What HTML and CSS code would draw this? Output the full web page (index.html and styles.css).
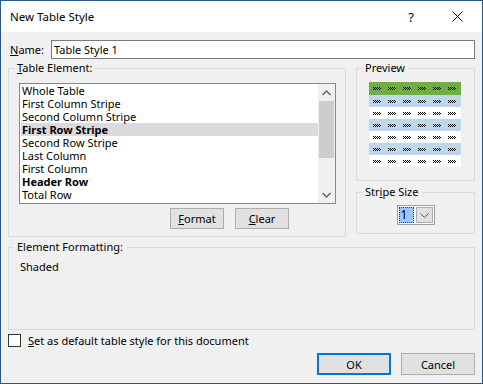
FILE: index.html
```html
<!DOCTYPE html>
<html lang="en">
<head>
  <meta charset="UTF-8" />
  <title>New Table Style</title>
  <link rel="stylesheet" href="styles.css">
</head>
<body>
  <div class="dialog">
    <div class="titlebar">
      <span class="title">New Table Style</span>
      <span class="help">?</span>
      <svg class="close" width="11" height="11" viewBox="0 0 11 11">
        <path d="M0.5 0.5 L10.5 10.5 M10.5 0.5 L0.5 10.5" stroke="#000" stroke-width="1" fill="none"/>
      </svg>
    </div>

    <div class="content">
      <div class="name-row">
        <label class="name-label" for="styleName"><u>N</u>ame:</label>
        <input type="text" id="styleName" class="name-input" value="Table Style 1" />
      </div>

      <div class="main">
        <!-- Table Element -->
        <fieldset class="group elements">
          <legend><u>T</u>able Element:</legend>
          <div class="group-body">
            <div class="listbox">
              <ul class="items">
                <li>Whole Table</li>
                <li>First Column Stripe</li>
                <li>Second Column Stripe</li>
                <li class="bold selected">First Row Stripe</li>
                <li>Second Row Stripe</li>
                <li>Last Column</li>
                <li>First Column</li>
                <li class="bold">Header Row</li>
                <li>Total Row</li>
              </ul>
              <div class="scrollbar">
                <div class="arrow">
                  <svg width="9" height="6" viewBox="0 0 9 6"><path d="M0.5 5 L4.5 1 L8.5 5" stroke="#606060" stroke-width="1.3" fill="none"/></svg>
                </div>
                <div class="thumb"></div>
                <div class="track"></div>
                <div class="arrow">
                  <svg width="9" height="6" viewBox="0 0 9 6"><path d="M0.5 1 L4.5 5 L8.5 1" stroke="#606060" stroke-width="1.3" fill="none"/></svg>
                </div>
              </div>
            </div>
            <div class="list-buttons">
              <button class="btn small"><u>F</u>ormat</button>
              <button class="btn small"><u>C</u>lear</button>
            </div>
          </div>
        </fieldset>

        <div class="side">
          <!-- Preview -->
          <fieldset class="group preview">
            <legend>Preview</legend>
            <div class="group-body">
              <div class="preview-table">
                <div class="prow header"><i></i><i></i><i></i><i></i><i></i><i></i></div>
                <div class="prow band"><i></i><i></i><i></i><i></i><i></i><i></i></div>
                <div class="prow"><i></i><i></i><i></i><i></i><i></i><i></i></div>
                <div class="prow band"><i></i><i></i><i></i><i></i><i></i><i></i></div>
                <div class="prow"><i></i><i></i><i></i><i></i><i></i><i></i></div>
                <div class="prow band"><i></i><i></i><i></i><i></i><i></i><i></i></div>
                <div class="prow"><i></i><i></i><i></i><i></i><i></i><i></i></div>
              </div>
            </div>
          </fieldset>

          <!-- Stripe Size -->
          <fieldset class="group stripe">
            <legend>Str<u>i</u>pe Size</legend>
            <div class="group-body">
              <div class="combo">
                <span class="combo-value">1</span>
                <span class="combo-drop">
                  <svg width="9" height="5" viewBox="0 0 9 5"><path d="M0.5 0.5 L4.5 4.5 L8.5 0.5" stroke="#555" stroke-width="1" fill="none"/></svg>
                </span>
              </div>
            </div>
          </fieldset>
        </div>
      </div>

      <fieldset class="group formatting">
        <legend>Element Formatting:</legend>
        <div class="group-body">Shaded</div>
      </fieldset>

      <div class="check-row">
        <span class="checkbox"></span>
        <span><u>S</u>et as default table style for this document</span>
      </div>

      <div class="dialog-buttons">
        <button class="btn wide default">OK</button>
        <button class="btn wide">Cancel</button>
      </div>
    </div>
  </div>
</body>
</html>
```

FILE: styles.css
```css
body {
  margin: 0;
  font-family: 'Noto Sans', 'Open Sans', sans-serif;
  font-size: 11px;
  color: #000;
  background: #fff;
}

.dialog {
  width: 483px;
  height: 384px;
  box-sizing: border-box;
  border: 1px solid #2b5583;
  background: #f0f0f0;
  display: flex;
  flex-direction: column;
}

/* title bar */
.titlebar {
  height: 31px;
  background: #fff;
  display: flex;
  align-items: center;
  padding-left: 9px;
}

.title {
  font-size: 11.5px;
  flex: 1;
}

.help {
  font-size: 13px;
  margin-right: 38px;
}

.close {
  margin-right: 19px;
}

.content {
  padding: 0 7px;
  display: flex;
  flex-direction: column;
}

u {
  text-decoration: underline;
  text-underline-offset: 1px;
}

/* name row */
.name-row {
  display: flex;
  align-items: center;
  margin-top: 8px;
  height: 19px;
}

.name-label {
  width: 41px;
  padding-left: 2px;
}

.name-input {
  flex: 1;
  height: 19px;
  box-sizing: border-box;
  margin: 0;
  border: 1px solid #7a7a7a;
  padding: 0 2px;
  font: inherit;
  background: #fff;
}

/* group boxes */
.group {
  margin: 0;
  padding: 0;
  border: 1px solid #dcdcdc;
  min-width: 0;
  box-sizing: border-box;
}

.group legend {
  margin-left: 5px;
  padding: 0 3px;
  line-height: 14px;
  height: 14px;
}

.main {
  display: grid;
  grid-template-columns: 338px 119px;
  gap: 10px;
  margin-top: 2px;
}

.elements {
  height: 176px;
}

.elements .group-body {
  padding: 8px 9px 0 10px;
}

.listbox {
  display: flex;
  height: 121px;
  box-sizing: border-box;
  border: 1px solid #828790;
  background: #fff;
}

.items {
  flex: 1;
  list-style: none;
  margin: 0;
  padding: 0 0 0 1px;
}

.items li {
  height: 13px;
  line-height: 13px;
  padding-left: 1px;
  white-space: nowrap;
}

.items .bold {
  font-weight: bold;
}

.items .selected {
  background: #dadadf;
}

.scrollbar {
  width: 17px;
  background: #f0f0f0;
  display: flex;
  flex-direction: column;
}

.scrollbar .arrow {
  height: 17px;
  display: flex;
  align-items: center;
  justify-content: center;
}

.scrollbar .thumb {
  height: 57px;
  margin: 0 1px;
  background: #cdcdcd;
}

.scrollbar .track {
  flex: 1;
}

.list-buttons {
  display: flex;
  gap: 11px;
  margin-top: 4px;
  padding-left: 151px;
}

.btn {
  font: inherit;
  color: #000;
  background: #e1e1e1;
  border: 1px solid #adadad;
  margin: 0;
  padding: 0;
  box-sizing: border-box;
}

.btn.small {
  width: 54px;
  height: 21px;
}

.btn.wide {
  width: 74px;
  height: 22px;
}

.btn.default {
  border: 2px solid #0078d7;
}

/* right column */
.side {
  display: flex;
  flex-direction: column;
  gap: 4px;
}

.preview {
  height: 120px;
}

.preview .group-body {
  padding: 7px 0 0 12px;
}

.preview-table {
  width: 92px;
  background: #fff;
}

.prow {
  display: flex;
  height: 12px;
  align-items: center;
}

.prow.header {
  height: 13px;
  background: #70ad47;
}

.prow.band {
  background: #bdd7ee;
}

/* tiny checker placeholder for cell text */
.prow i {
  display: block;
  width: 8px;
  height: 3px;
  margin: 0 3px 0 4px;
  background-image:
    linear-gradient(90deg, #000 50%, transparent 50%),
    linear-gradient(90deg, transparent 50%, #000 50%),
    linear-gradient(90deg, #000 50%, transparent 50%);
  background-size: 2px 1px;
  background-repeat: repeat-x;
  background-position: 0 0, 0 1px, 0 2px;
}

.stripe {
  height: 49px;
}

.stripe .group-body {
  padding-top: 6px;
  display: flex;
  justify-content: center;
}

.combo {
  display: flex;
  width: 38px;
  height: 20px;
  box-sizing: border-box;
  border: 1px solid #a0a0a0;
  background: #fff;
  padding: 1px;
}

.combo-value {
  width: 15px;
  background: #99c9ff;
  outline: 1px dotted #5a3a1a;
  outline-offset: -1px;
  font-size: 12px;
  line-height: 16px;
  padding-left: 2px;
  box-sizing: border-box;
}

.combo-drop {
  flex: 1;
  margin-left: 2px;
  background: #e1e1e1;
  border: 1px solid #adadad;
  display: flex;
  align-items: center;
  justify-content: center;
}

/* bottom */
.formatting {
  margin-top: 3px;
  height: 90px;
}

.formatting .group-body {
  padding: 6px 11px 0;
  line-height: 14px;
}

.check-row {
  display: flex;
  align-items: center;
  gap: 7px;
  margin-top: 4px;
  height: 13px;
}

.checkbox {
  width: 13px;
  height: 13px;
  box-sizing: border-box;
  border: 1px solid #333;
  background: #fff;
}

.dialog-buttons {
  display: flex;
  justify-content: flex-end;
  gap: 10px;
  margin-top: 6px;
}
```
